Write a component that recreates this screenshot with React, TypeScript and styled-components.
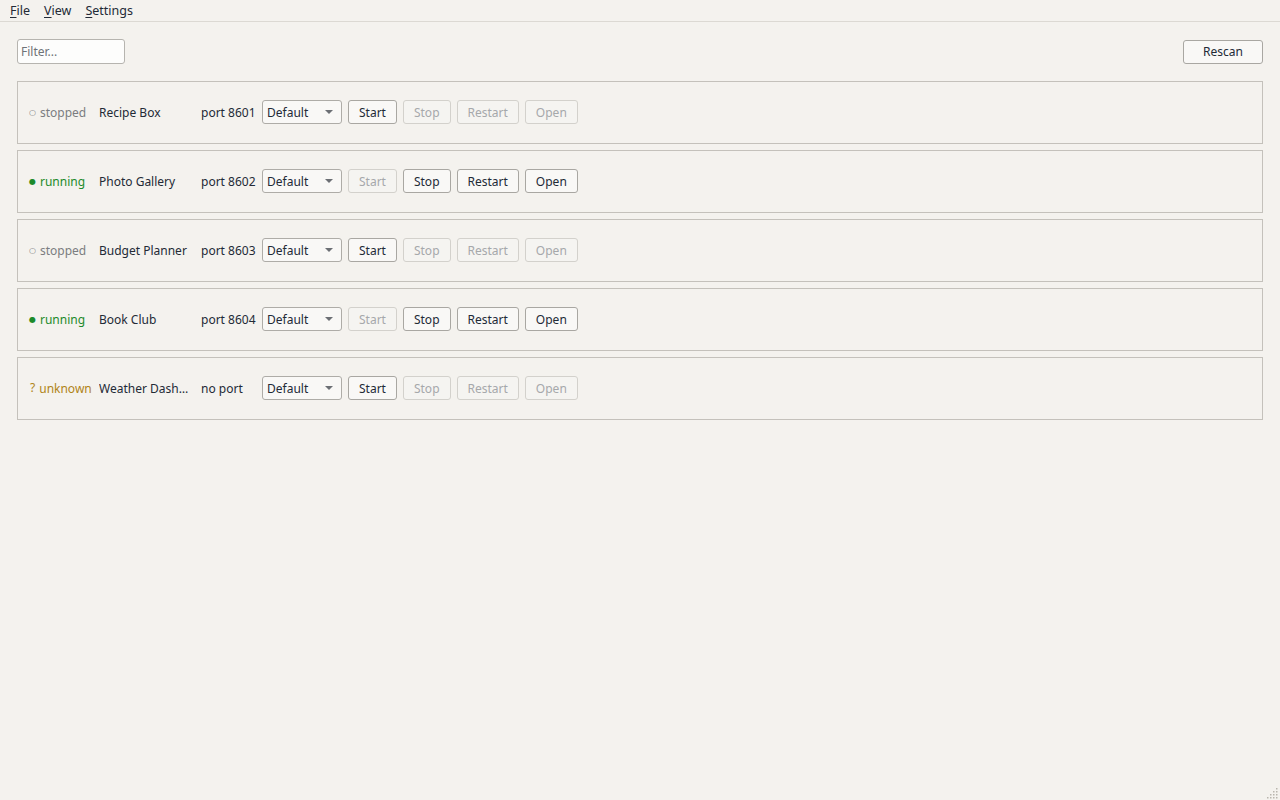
import React, { useState } from "react";
import styled, { createGlobalStyle } from "styled-components";

type Status = "stopped" | "running" | "unknown";

interface Project {
  name: string;
  port: number | null;
  status: Status;
}

const projects: Project[] = [
  { name: "Recipe Box", port: 8601, status: "stopped" },
  { name: "Photo Gallery", port: 8602, status: "running" },
  { name: "Budget Planner", port: 8603, status: "stopped" },
  { name: "Book Club", port: 8604, status: "running" },
  { name: "Weather Dashboard", port: null, status: "unknown" },
];

const statusGlyph: Record<Status, string> = {
  stopped: "○",
  running: "●",
  unknown: "?",
};

const statusColor: Record<Status, string> = {
  stopped: "#7b7d80",
  running: "#1c8a2a",
  unknown: "#b08418",
};

const App = () => {
  const [filter, setFilter] = useState("");
  const shown = projects.filter((p) => p.name.toLowerCase().includes(filter.toLowerCase()));

  return (
    <>
      <GlobalStyle />
      <Window>
        <MenuBar>
          <MenuItem>
            <u>F</u>ile
          </MenuItem>
          <MenuItem>
            <u>V</u>iew
          </MenuItem>
          <MenuItem>
            <u>S</u>ettings
          </MenuItem>
        </MenuBar>

        <Body>
          <TopRow>
            <FilterInput placeholder="Filter..." value={filter} onChange={(e) => setFilter(e.target.value)} />
            <Button $wide>Rescan</Button>
          </TopRow>

          <List>
            {shown.map((p) => {
              const running = p.status === "running";
              return (
                <Card key={p.name}>
                  <StatusLabel $status={p.status}>
                    <Glyph $small={p.status !== "unknown"}>{statusGlyph[p.status]}</Glyph>
                    {p.status}
                  </StatusLabel>
                  <NameLabel title={p.name}>{p.name}</NameLabel>
                  <PortLabel>{p.port ? `port ${p.port}` : "no port"}</PortLabel>
                  <Combo>
                    <span>Default</span>
                    <Arrow />
                  </Combo>
                  <Button disabled={running}>Start</Button>
                  <Button disabled={!running}>Stop</Button>
                  <Button disabled={!running}>Restart</Button>
                  <Button disabled={!running}>Open</Button>
                </Card>
              );
            })}
          </List>
        </Body>

        <Grip width="12" height="12" viewBox="0 0 12 12">
          {[
            [10, 2],
            [10, 5],
            [7, 5],
            [10, 8],
            [7, 8],
            [4, 8],
            [10, 11],
            [7, 11],
            [4, 11],
            [1, 11],
          ].map(([x, y]) => (
            <rect key={`${x}_${y}`} x={x - 1} y={y - 1} width="1.5" height="1.5" fill="#b9b6ae" />
          ))}
        </Grip>
      </Window>
    </>
  );
};

export default App;

const GlobalStyle = createGlobalStyle`
  html, body {
    margin: 0;
    padding: 0;
    background: #f4f2ee;
  }
  body {
    font-family: "Noto Sans", "DejaVu Sans", sans-serif;
    font-size: 12px;
    color: #232a36;
  }
`;

const Window = styled.div`
  position: relative;
  width: 1280px;
  height: 800px;
  background: #f4f2ee;
  overflow: hidden;
`;

const MenuBar = styled.div`
  display: flex;
  height: 22px;
  padding-left: 3px;
  border-bottom: 1px solid #dcd9d3;
  box-sizing: border-box;
`;

const MenuItem = styled.div`
  padding: 0 7px;
  line-height: 21px;
  font-size: 12.5px;
  cursor: default;

  & u {
    text-decoration-thickness: 1px;
    text-underline-offset: 2px;
  }
`;

const Body = styled.div`
  padding: 17px 17px 0 17px;
`;

const TopRow = styled.div`
  display: flex;
  justify-content: space-between;
  align-items: center;
  height: 25px;
`;

const FilterInput = styled.input`
  width: 108px;
  height: 25px;
  box-sizing: border-box;
  margin: 0;
  padding: 0 3px;
  font: inherit;
  color: inherit;
  background: #fdfdfc;
  border: 1px solid #b6b4af;
  border-radius: 3px;
  outline: none;

  &::placeholder {
    color: #6f7378;
  }
`;

const List = styled.div`
  display: flex;
  flex-direction: column;
  gap: 6px;
  margin-top: 17px;
`;

const Card = styled.div`
  display: flex;
  align-items: center;
  gap: 6px;
  height: 63px;
  box-sizing: border-box;
  padding: 0 11px 1px;
  border: 1px solid #c4c1bb;
`;

const StatusLabel = styled.div<{ $status: Status }>`
  display: flex;
  align-items: center;
  width: 64px;
  flex: none;
  white-space: nowrap;
  color: ${(p) => statusColor[p.$status]};
`;

const Glyph = styled.span<{ $small: boolean }>`
  font-size: ${(p) => (p.$small ? "8px" : "12px")};
  margin-left: ${(p) => (p.$small ? "0" : "1px")};
  margin-right: 4px;
  line-height: 1;
`;

const NameLabel = styled.div`
  width: 96px;
  flex: none;
  white-space: nowrap;
  overflow: hidden;
  text-overflow: ellipsis;
`;

const PortLabel = styled.div`
  width: 55px;
  flex: none;
  white-space: nowrap;
`;

const Combo = styled.div`
  display: flex;
  align-items: center;
  justify-content: space-between;
  width: 80px;
  height: 24px;
  box-sizing: border-box;
  padding: 0 8px 0 4px;
  background: #f9f8f6;
  border: 1px solid #aeaca7;
  border-radius: 3px;
`;

const Arrow = styled.span`
  width: 0;
  height: 0;
  border-left: 4px solid transparent;
  border-right: 4px solid transparent;
  border-top: 4px solid #6c6f74;
`;

const Button = styled.button<{ $wide?: boolean }>`
  height: 24px;
  min-width: ${(p) => (p.$wide ? "80px" : "0")};
  box-sizing: border-box;
  margin: 0;
  padding: 0 10px;
  font: inherit;
  color: #232a36;
  background: #f9f8f6;
  border: 1px solid #a9a7a2;
  border-radius: 3px;
  cursor: default;

  &:disabled {
    color: #a6a8ab;
    border-color: #d3d1cc;
    background: #f5f4f1;
  }
`;

const Grip = styled.svg`
  position: absolute;
  right: 1px;
  bottom: 1px;
`;
